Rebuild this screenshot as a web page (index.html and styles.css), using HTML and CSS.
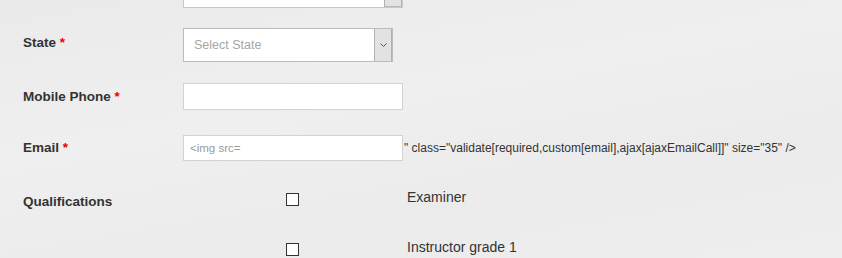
FILE: index.html
```html
<!DOCTYPE html>
<html lang="en">
<head>
    <meta charset="UTF-8">
    <title>Registration</title>
    <link rel="stylesheet" href="styles.css">
</head>
<body>
    <form class="reg-form">
        <div class="form-row row-top">
            <span class="field-label"></span>
            <div class="select-box select-wide">
                <span class="select-text"></span>
                <span class="select-btn"></span>
            </div>
        </div>

        <div class="form-row row-state">
            <label class="field-label">State <span class="req">*</span></label>
            <div class="select-box">
                <span class="select-text">Select State</span>
                <span class="select-btn">
                    <svg width="7" height="4" viewBox="0 0 7 4"><polyline points="0.5,0.5 3.5,3.5 6.5,0.5" fill="none" stroke="#555" stroke-width="1"/></svg>
                </span>
            </div>
        </div>

        <div class="form-row row-mobile">
            <label class="field-label">Mobile Phone <span class="req">*</span></label>
            <input type="text" class="text-input input-mobile">
        </div>

        <div class="form-row row-email">
            <label class="field-label">Email <span class="req">*</span></label>
            <input type="text" class="text-input input-email" placeholder="<img src=">
            <span class="raw-code">" class="validate[required,custom[email],ajax[ajaxEmailCall]]" size="35" /&gt;</span>
        </div>

        <div class="qual-block">
            <div class="form-row qual-row">
                <label class="field-label">Qualifications</label>
                <span class="check-cell"><span class="check-box"></span></span>
                <span class="check-text">Examiner</span>
            </div>
            <div class="form-row qual-row">
                <span class="field-label"></span>
                <span class="check-cell"><span class="check-box"></span></span>
                <span class="check-text">Instructor grade 1</span>
            </div>
        </div>
    </form>
</body>
</html>
```

FILE: styles.css
```css
/* Registration form, light textured page */
body {
    margin: 0;
    height: 258px;
    overflow: hidden;
    background-color: #ececec;
    background-image: linear-gradient(170deg, #eaeaea 0%, #efefef 40%, #ebebeb 70%, #eeeeee 100%);
    font-family: "Liberation Sans", Arial, sans-serif;
    color: #333;
}
.reg-form {
    padding-left: 23px;
}
.form-row {
    display: flex;
    align-items: center;
}
.field-label {
    width: 160px;
    flex-shrink: 0;
    font-size: 13.5px;
    font-weight: bold;
    color: #333;
}
.req {
    color: #e00;
}

/* --- select boxes --- */
.select-box {
    display: flex;
    width: 208px;
    height: 32px;
    border: 1px solid #bcbcbc;
    background: #fff;
}
.select-wide {
    width: 218px;
    height: 26px;
    border-color: #c8c8c8;
}
.select-text {
    flex: 1;
    align-self: center;
    padding-left: 10px;
    font-size: 12.5px;
    color: #a5a5a5;
}
.select-btn {
    width: 16px;
    display: flex;
    align-items: center;
    justify-content: center;
    background: #e2e2e2;
    border-left: 1px solid #b0b0b0;
    border-right: 1px solid #b0b0b0;
}
.row-top {
    margin-top: -20px;
}
.row-top .select-btn {
    border-bottom: 1px solid #b8b8b8;
}
.row-state {
    margin-top: 20px;
}
.row-state .field-label {
    margin-top: -5px;
}

/* --- text inputs --- */
.text-input {
    box-sizing: border-box;
    width: 220px;
    margin: 0;
    padding: 0 6px;
    border: 1px solid #d2d2d2;
    background: #fff;
    font-family: "Liberation Sans", Arial, sans-serif;
    font-size: 11.5px;
    outline: none;
}
.text-input::placeholder {
    color: #9a9a9a;
}
.input-mobile {
    height: 27px;
}
.input-email {
    height: 26px;
}
.row-mobile {
    margin-top: 21px;
}
.row-email {
    margin-top: 25px;
}
.row-email .field-label {
    margin-top: -2px;
}
.raw-code {
    padding-left: 1px;
    font-size: 12px;
    color: #333;
    white-space: nowrap;
}

/* --- qualifications --- */
.qual-block {
    margin-top: 26px;
}
.qual-row {
    height: 24px;
}
.qual-row + .qual-row {
    margin-top: 26px;
}
.qual-row .field-label {
    margin-top: 4px;
}
.check-cell {
    width: 121px;
    padding-left: 103px;
    flex-shrink: 0;
    display: flex;
}
.check-box {
    width: 11px;
    height: 11px;
    border: 1px solid #333;
    background: #fff;
}
.check-text {
    font-size: 14px;
    color: #333;
    margin-top: -5px;
}
```
